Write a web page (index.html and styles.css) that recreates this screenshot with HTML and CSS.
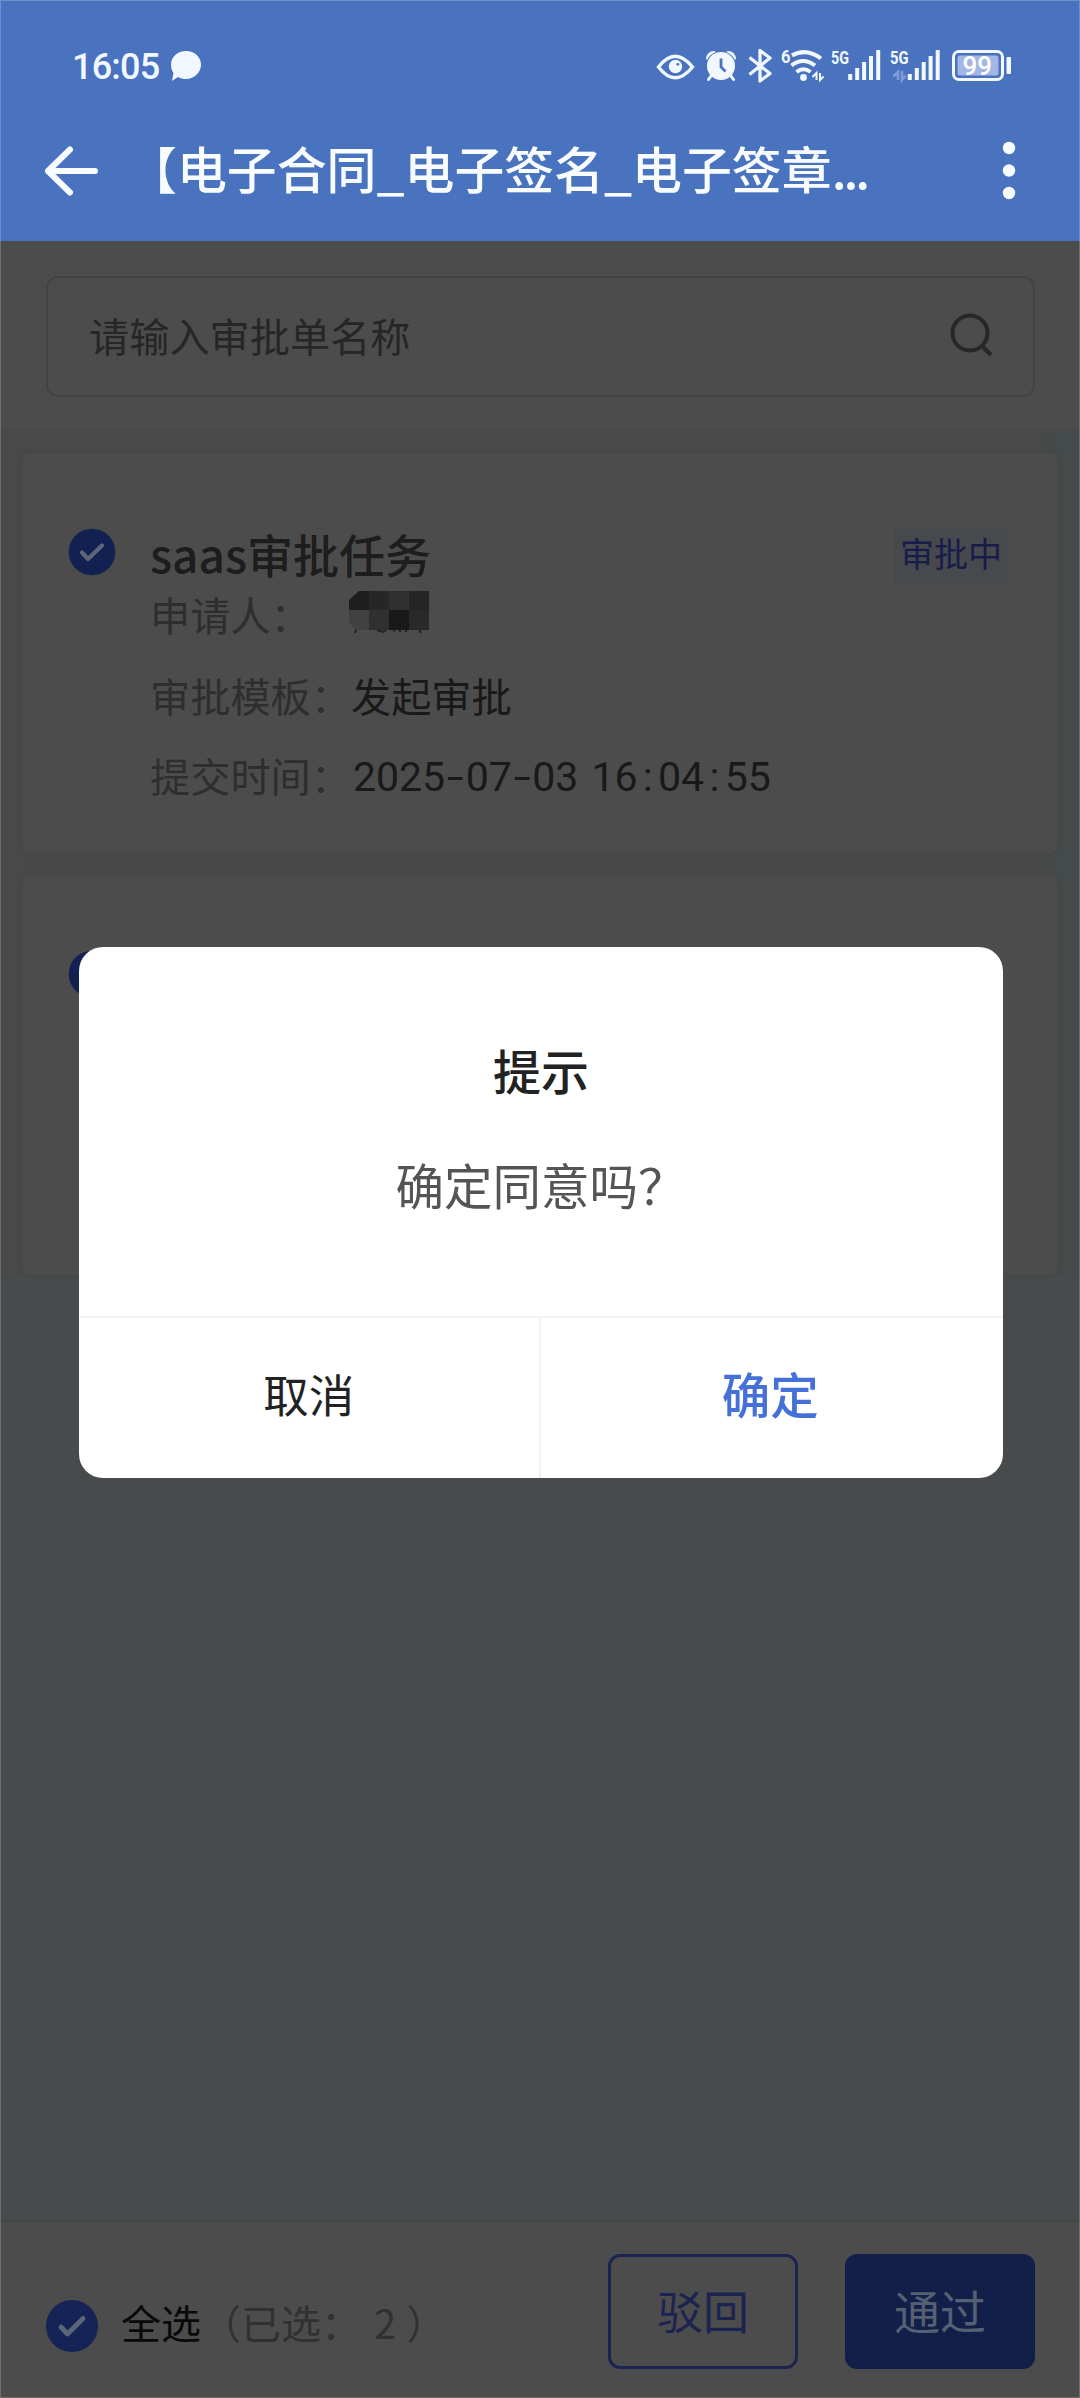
FILE: index.html
```html
<!DOCTYPE html>
<html lang="zh-CN">
<head>
<meta charset="utf-8">
<title>审批</title>
<link rel="stylesheet" href="styles.css">
</head>
<body>
<div class="screen">
  <header class="topbar">
    <div class="status">
      <span class="clock">16:05</span>
      <svg class="bubble" width="32" height="32" viewBox="0 0 32 32"><path d="M16 1C24.500 1 31 7 31 14.500S24.500 29 16 29C13 29 10.500 28.500 8 27L2 31L3.500 23C1.800 20.500 1 17.500 1 14.500C1 7 7.500 1 16 1Z"/></svg>
      <svg class="indicators" width="360" height="44" viewBox="655 44 360 44">
        <g fill="none" stroke="#f2f8ff" stroke-width="3.400">
          <path d="M658.500 67Q675 45.500 692.500 67Q675 88.500 658.500 67Z"/>
        </g>
        <circle cx="675.500" cy="66.500" r="6.700" fill="#f2f8ff"/>
        <circle cx="677.800" cy="64.300" r="1.400" fill="#4973be"/>
        <g fill="#f2f8ff">
          <circle cx="721" cy="66" r="14"/>
          <path d="M706 59A8 8 0 0 1 714 51L716 52Q710 54 707 60Z"/>
          <path d="M736 59A8 8 0 0 0 728 51L726 52Q732 54 735 60Z"/>
        </g>
        <path d="M711 76L708.500 79.500M731 76L733.500 79.500" stroke="#f2f8ff" stroke-width="3" stroke-linecap="round"/>
        <path d="M721 58.500V67L725.500 71.500" fill="none" stroke="#4973be" stroke-width="2.800"/>
        <path d="M749.500 57.500L770 73.500L760 81V50.500L770 58L749.500 74.500" fill="none" stroke="#f2f8ff" stroke-width="3.300" stroke-linejoin="round"/>
        <text x="781" y="63" class="net" textLength="9.500" lengthAdjust="spacingAndGlyphs">6</text>
        <g fill="none" stroke="#f2f8ff" stroke-width="4">
          <path d="M792 55.500Q806 47.500 821 58.500"/>
          <path d="M791.500 65.500Q803 56.500 815 65.500"/>
          <path d="M796.500 72Q803.500 66.500 810.500 72"/>
        </g>
        <circle cx="803.500" cy="77.500" r="3.400" fill="#f2f8ff"/>
        <path d="M816.500 80V73L812.500 77M820 73V80L823.500 76.500" fill="none" stroke="#f2f8ff" stroke-width="2"/>
        <text x="831" y="63.500" class="net" textLength="18" lengthAdjust="spacingAndGlyphs">5G</text>
        <text x="890" y="63.500" class="net" textLength="18.500" lengthAdjust="spacingAndGlyphs">5G</text>
        <g stroke="#f2f8ff" stroke-width="4">
          <path d="M850.200 74V80M857.200 68V80M864.100 62V80M871 56V80M878.200 50V80"/>
          <path d="M909.800 74V80M916.800 68V80M923.700 62V80M930.600 56V80M937.700 50V80"/>
        </g>
        <path d="M898 80V72L893.500 76.500M902 71V80L905.500 75.500" fill="none" stroke="#7f9ad8" stroke-width="2.600"/>
        <rect x="953.500" y="51.500" width="49" height="28" rx="5.500" fill="none" stroke="#f2f8ff" stroke-width="3"/>
        <rect x="957.500" y="55.500" width="41" height="20" rx="2.500" fill="#a3b7e6"/>
        <text x="962.500" y="75" class="charge" textLength="29.500" lengthAdjust="spacingAndGlyphs">99</text>
        <rect x="1006.500" y="57" width="4.500" height="17" rx="1" fill="#f2f8ff"/>
      </svg>
    </div>
    <div class="nav">
      <svg class="back" width="56" height="52" viewBox="0 0 56 52"><path d="M27 4.500L5 26L27 47.500M5 26H52" fill="none" stroke="#f8fcff" stroke-width="6" stroke-linecap="round" stroke-linejoin="round"/></svg>
      <h1 class="nav-title">【电子合同_电子签名_电子签章<span class="more-text">...</span></h1>
      <svg class="kebab" width="14" height="60" viewBox="0 0 14 60"><circle cx="7" cy="7" r="6.200"/><circle cx="7" cy="29.500" r="6.200"/><circle cx="7" cy="52" r="6.200"/></svg>
    </div>
  </header>

  <section class="search">
    <div class="search-box">
      <span>请输入审批单名称</span>
      <svg width="46" height="46" viewBox="0 0 46 46"><circle cx="23" cy="22" r="17.500" fill="none" stroke="#272727" stroke-width="4"/><path d="M35 35L44 44" stroke="#272727" stroke-width="4"/></svg>
    </div>
  </section>

  <main class="list">
    <article class="card">
      <svg class="check" width="48" height="48" viewBox="0 0 48 48"><circle cx="24" cy="24" r="23.300" fill="#122052"/><path d="M14 24.500L20 31L34 17.500" fill="none" stroke="#5d6679" stroke-width="4.200" stroke-linecap="round" stroke-linejoin="round"/></svg>
      <div class="card-body">
        <div class="card-head"><h2>saas审批任务</h2><span class="tag">审批中</span></div>
        <div class="row"><span class="label">申请人：</span>
          <svg class="mosaic" width="80" height="46" viewBox="0 0 80 46"><path d="M10 0H20V19H0V9Z" fill="#1e1e1e"/><path d="M20 0H40V19H20Z" fill="#262626"/><path d="M40 0H60V19H40Z" fill="#303030"/><path d="M60 0H80V19H60Z" fill="#252525"/><path d="M0 19H20V39H7L0 32Z" fill="#414141"/><path d="M20 19H40V39H20Z" fill="#303030"/><path d="M40 19H60V39H40Z" fill="#191919"/><path d="M60 19H80V39H60Z" fill="#292929"/><path d="M7 39L6 42M28 39L34 41L37 39M44 39L46 40M51 39V41M57 39V41M70 39L72 42" fill="none" stroke="#222" stroke-width="2"/></svg>
        </div>
        <div class="row"><span class="label">审批模板：</span><span class="value">发起审批</span></div>
        <div class="row"><span class="label">提交时间：</span><span class="value date">2025<i>-</i>07<i>-</i>03 16<b>:</b>04<b>:</b>55</span></div>
      </div>
    </article>
    <article class="card">
      <svg class="check" width="48" height="48" viewBox="0 0 48 48"><circle cx="24" cy="24" r="23.300" fill="#122052"/><path d="M14 24.500L20 31L34 17.500" fill="none" stroke="#5d6679" stroke-width="4.200" stroke-linecap="round" stroke-linejoin="round"/></svg>
    </article>
  </main>

  <footer class="actions">
    <svg class="check-all" width="52" height="52" viewBox="0 0 52 52"><circle cx="26" cy="26" r="26" fill="#152357"/><path d="M15 27L21.500 34L37 18.500" fill="none" stroke="#5d6679" stroke-width="4.800" stroke-linecap="round" stroke-linejoin="round"/></svg>
    <span class="all">全选</span><span class="count">（已选：<span class="num">2</span>）</span>
    <button class="btn reject">驳回</button>
    <button class="btn pass">通过</button>
  </footer>

  <div class="dialog">
    <div class="dialog-main">
      <h3>提示</h3>
      <p>确定同意吗？</p>
    </div>
    <div class="dialog-buttons">
      <button class="cancel">取消</button>
      <button class="confirm">确定</button>
    </div>
  </div>
</div>
</body>
</html>
```
FILE: styles.css
```css
* { box-sizing: border-box; margin: 0; padding: 0; }
body {
  width: 1080px;
  height: 2398px;
  overflow: hidden;
  font-family: "Noto Sans CJK SC", sans-serif;
}
button { font-family: inherit; background: none; border: 0; }
svg { display: block; flex: none; }

.screen {
  position: relative;
  display: flex;
  flex-direction: column;
  height: 2398px;
  background: #474b4c;
}
.screen::after {
  content: "";
  position: absolute;
  inset: 0;
  border: 1px solid rgba(255, 255, 255, .2);
  pointer-events: none;
}

.topbar { height: 241px; background: #4973be; }
.status {
  display: flex;
  align-items: center;
  height: 100px;
  padding: 31px 65px 0 72px;
}
.clock {
  width: 98px;
  padding-top: 2px;
  font: 500 36px/70px Roboto, sans-serif;
  letter-spacing: -.8px;
  color: #f2f8ff;
}
.bubble { fill: #f2f8ff; }
.indicators { margin-left: auto; }
.net { font: 700 18px Roboto, sans-serif; fill: #f2f8ff; }
.charge { font: 500 26px Roboto, sans-serif; fill: #fff; }

.nav {
  display: flex;
  align-items: center;
  height: 141px;
  padding: 0 64px 0 43px;
}
.nav-title {
  margin-left: 28px;
  padding-bottom: 7px;
  font-size: 49.900px;
  font-weight: 500;
  line-height: 72px;
  color: #f8fcff;
  white-space: nowrap;
}
.more-text { letter-spacing: -3.100px; }
.kebab { margin-left: auto; fill: #f8fcff; }

.search {
  height: 190px;
  padding: 35px 45px 0 46px;
  background: #4c4c4c;
  border-bottom: 2px solid #494949;
}
.search-box {
  display: flex;
  align-items: center;
  justify-content: space-between;
  height: 121px;
  padding: 0 40px 5px 41px;
  border: 2px solid #434343;
  border-radius: 12px;
  font-size: 40.200px;
  color: #262626;
}

.list {
  display: flex;
  flex-direction: column;
  gap: 22px;
  padding: 22px;
  flex: 1;
  background: linear-gradient(90deg, #49494b, #494949 5%, #494949 96%, #454a4b 98%) no-repeat 0 0 / 100% 844px;
}
.card {
  display: flex;
  height: 400px;
  padding: 79px 48px 0 46px;
  background: #4c4c4c;
  border-radius: 8px;
  box-shadow: 0 0 4px rgba(0, 0, 0, .1);
}
.check { margin-top: -4px; }
.card-body { flex: 1; margin-left: 34px; }
.card-head {
  display: flex;
  justify-content: space-between;
  align-items: center;
  height: 42px;
}
h2 { font-size: 46px; font-weight: 500; line-height: 42px; color: #1d1d1d; }
.tag {
  height: 57px;
  margin: 5px 2px 0 0;
  padding: 0 6px;
  border-radius: 4px;
  background: #47494d;
  font-size: 34px;
  line-height: 52px;
  color: #171c4a;
}
.row { display: flex; height: 80.500px; font-size: 40.200px; line-height: 80.500px; }
.label { color: #2e2e2e; }
.value { color: #191919; }
.mosaic { margin: 17px 0 0 38px; }
.date { padding: 2px 0 0 2px; font-family: Roboto, sans-serif; font-size: 41px; word-spacing: 3px; }
.date i, .date b { display: inline-block; width: 20.500px; text-align: center; font-style: normal; font-weight: 400; }
.date i { transform: scaleX(1.500); }

.actions {
  display: flex;
  align-items: center;
  height: 178px;
  padding: 5px 45px 0 46px;
  border-top: 2px solid #444;
  background: #4c4c4c;
  font-size: 40px;
}
.check-all { margin-top: 26px; }
.all { margin: 19px 0 0 23px; color: #090909; }
.count { margin-top: 19px; color: #313131; }
.num { padding: 0 10px 0 13px; }
.btn {
  width: 190px;
  height: 115px;
  margin-top: -3px;
  padding-bottom: 5px;
  border-radius: 12px;
  font-size: 46px;
}
.reject { margin-left: auto; border: 3px solid #1b2451; color: #1b2451; }
.pass { margin-left: 47px; background: #121f48; color: #566073; }

.dialog {
  position: absolute;
  left: 79px;
  top: 947px;
  display: flex;
  flex-direction: column;
  width: 924px;
  height: 531px;
  border-radius: 24px;
  background: #fff;
  text-align: center;
}
.dialog-main { height: 371px; padding-top: 86px; border-bottom: 2px solid #f3f3f3; }
h3 { font-size: 48px; font-weight: 500; line-height: 72px; color: #222; }
.dialog-main p { margin-top: 43px; font-size: 48.500px; line-height: 72px; color: #555; }
.dialog-buttons { display: flex; flex: 1; }
.dialog-buttons button { flex: 1; padding-bottom: 11px; }
.cancel { border-right: 2px solid #f3f3f3; font-size: 45.500px; color: #222; }
.dialog-buttons .confirm { padding-right: 3px; font-size: 48.500px; font-weight: 500; color: #4470d8; }
```
